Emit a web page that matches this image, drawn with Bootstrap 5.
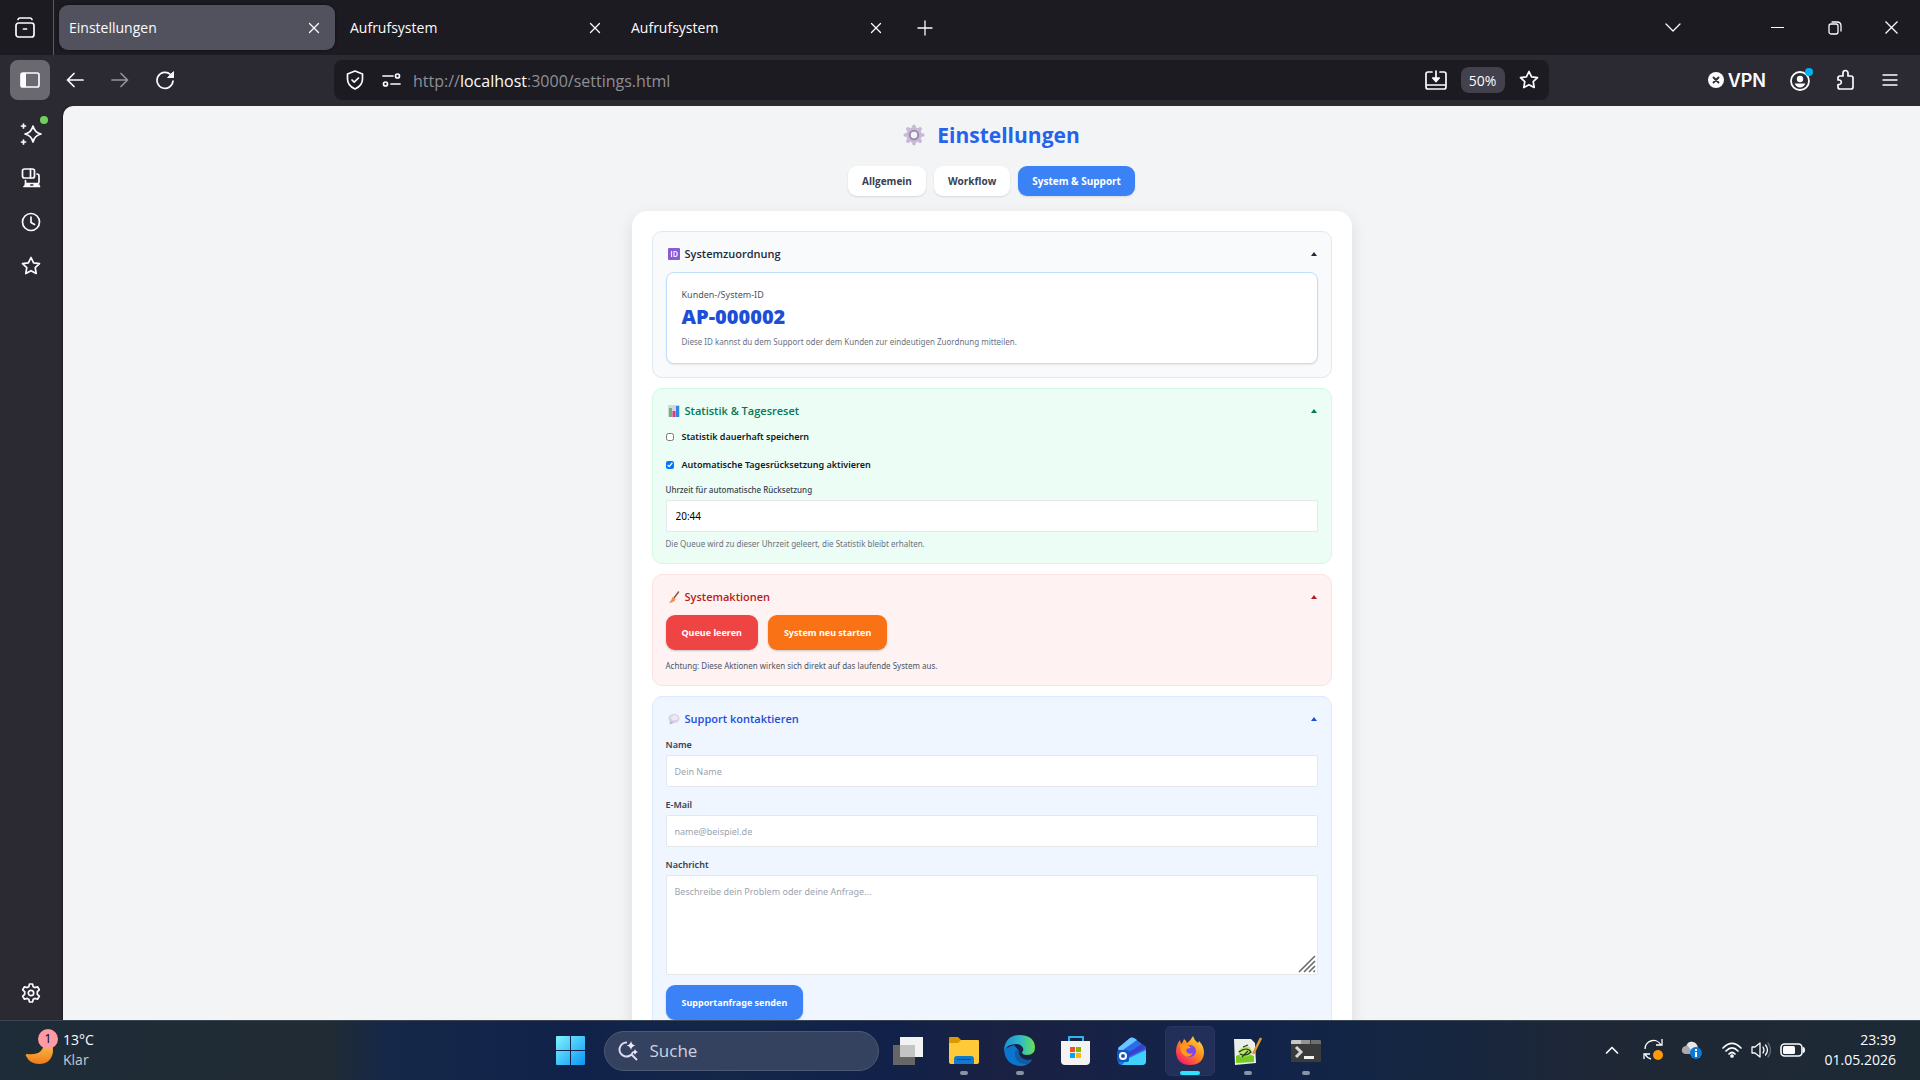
<!DOCTYPE html>
<html lang="de">
<head>
    <meta charset="UTF-8">
    <meta name="viewport" content="width=device-width, initial-scale=1">
    <title>Einstellungen</title>
    <link href="https://cdn.jsdelivr.net/npm/bootstrap@5.3.0/dist/css/bootstrap.min.css" rel="stylesheet">
    <style>
        body {
            font-family: "Open Sans", "Noto Sans", sans-serif;
            font-size: 14px;
            background-color: #2b2a33;
            color: #fbfbfe;
        }
        svg {
            display: block;
            flex-shrink: 0;
        }
        .line-icon {
            fill: none;
            stroke: currentColor;
            stroke-width: 1.7;
            stroke-linecap: round;
            stroke-linejoin: round;
        }
        .thin-icon {
            stroke-width: 1.3;
        }
        .plain-btn {
            display: flex;
            align-items: center;
            justify-content: center;
            flex-shrink: 0;
            padding: 0;
            border: 0;
            background: none;
            color: inherit;
        }

        /* Tab strip */
        .tab-strip {
            height: 55px;
            background-color: #1c1b22;
        }
        .recent-tabs {
            width: 54px;
            border-right: 1px solid #5b5b66;
            padding-right: 4px;
        }
        .tab-list {
            gap: 5px;
            margin-left: 5px;
        }
        .browser-tab {
            width: 276px;
            height: 45px;
            padding: 0 10px;
            border-radius: 9px;
        }
        .browser-tab.current {
            background-color: #52525e;
            box-shadow: 0 0 3px rgba(0, 0, 0, .6);
        }
        .tab-close {
            width: 22px;
            height: 22px;
        }
        .win-btn {
            width: 57px;
        }

        /* Toolbar */
        .tool-bar {
            height: 51px;
            padding: 5px 10px 6px;
            gap: 5px;
        }
        .tool-btn {
            width: 40px;
            height: 40px;
            border-radius: 8px;
        }
        .tool-btn.pressed {
            background-color: #6a6972;
        }
        .url-bar {
            height: 40px;
            margin: 0 154px 0 144px;
            padding: 0 6px;
            border-radius: 8px;
            background-color: #1c1b22;
        }
        .url-input {
            padding-top: 2px;
            font-size: 16px;
            color: #8f8f98;
            white-space: nowrap;
        }
        .url-input b {
            font-weight: 400;
            color: #fbfbfe;
        }
        .url-actions {
            gap: 14px;
        }
        .zoom-btn {
            width: 44px;
            height: 26px;
            border-radius: 8px;
            background-color: #42414d;
            font-size: 14px;
        }
        .vpn-btn {
            gap: 4px;
            font-family: Inter, sans-serif;
            font-size: 18px;
            font-weight: 600;
            margin-right: 9px;
        }

        /* Sidebar */
        .side-bar {
            width: 63px;
            padding-top: 8px;
            padding-bottom: 7px;
        }
        .side-btn {
            width: 62px;
            height: 40px;
        }
        .side-dot {
            top: 2px;
            right: 14px;
            width: 8px;
            height: 8px;
            background-color: #6fd35a;
        }

        /* Settings page */
        .web-page {
            min-width: 0;
            background-color: #f3f4f6;
            border-top-left-radius: 10px;
            box-shadow: 0 0 2px #000;
            color: #111827;
            font-family: "Noto Sans", "Open Sans", sans-serif;
            font-size: 9px;
            line-height: 12px;
        }
        .page-title {
            margin: 14px 0 16px;
            font-family: "Open Sans", sans-serif;
            font-size: 21px;
            line-height: 30px;
            font-weight: 700;
            color: #2563eb;
        }
        .page-tab {
            height: 30px;
            padding: 0 14px;
            border: 0;
            border-radius: 9px;
            background-color: #fff;
            box-shadow: 0 1px 2px rgba(0, 0, 0, .12);
            color: #374151;
            font-family: "Open Sans", sans-serif;
            font-size: 10px;
            font-weight: 700;
        }
        .page-tab.current {
            background-color: #3b82f6;
            color: #fff;
        }
        .settings-card {
            width: 100%;
            max-width: 720px;
            margin: 15px auto 0;
            padding: 20px;
            border-radius: 15px;
            background-color: #fff;
            box-shadow: 0 6px 16px rgba(0, 0, 0, .1);
        }
        .panel {
            margin-bottom: 10px;
            padding: 14px 13px 13px;
            border: 1px solid #e2e8f0;
            border-radius: 10px;
            background-color: #f8fafc;
        }
        .panel-green {
            background-color: #ecfdf5;
            border-color: #d1fae5;
        }
        .panel-red {
            background-color: #fef2f2;
            border-color: #fee2e2;
        }
        .panel-blue {
            background-color: #eff6ff;
            border-color: #dbeafe;
        }
        .panel-head {
            width: 100%;
            height: 16px;
            padding: 0 1px 0 2px;
            border: 0;
            background: none;
            font-family: "Open Sans", sans-serif;
            font-size: 11px;
            font-weight: 600;
            color: #1e293b;
        }
        .panel-head span {
            margin-left: 5px;
        }
        .panel-green .panel-head { color: #047857; }
        .panel-red .panel-head { color: #b91c1c; }
        .panel-blue .panel-head { color: #1d4ed8; }
        .id-box {
            margin-top: 10px;
            padding: 16px 15px;
            height: 92px;
            border: 1px solid #bfdbfe;
            border-radius: 8px;
            background-color: #fff;
            box-shadow: 0 1px 2px rgba(0, 0, 0, .08);
        }
        .id-value {
            margin: 6px 0 9px;
            font-family: "Open Sans", sans-serif;
            font-size: 20px;
            line-height: 20px;
            font-weight: 800;
            color: #1d4ed8;
        }
        .text-note {
            font-size: 8px;
            color: #6b7280;
        }
        .text-dim {
            color: #4b5563;
        }
        .check-row {
            height: 12px;
            margin-top: 12px;
            gap: 8px;
            font-weight: 600;
        }
        .check-row + .check-row {
            margin-top: 16px;
        }
        .check-row input {
            width: 8px;
            height: 8px;
            margin: 0;
        }
        .field-label {
            display: block;
            margin: 12px 0 4px;
            font-weight: 600;
            color: #374151;
        }
        .time-label {
            margin-top: 13px;
            font-size: 8px;
            font-weight: 500;
        }
        .field-box {
            display: block;
            width: 100%;
            height: 32px;
            padding: 0 8px;
            border: 1px solid #e5e7eb;
            border-radius: 2px;
            background-color: #fff;
            color: #000;
        }
        .field-box::placeholder {
            color: #9ca3af;
        }
        .time-box {
            margin-bottom: 6px;
            padding-left: 9px;
            font-size: 10px;
        }
        textarea.field-box {
            height: 100px;
            padding-top: 10px;
            resize: none;
        }
        .grip {
            right: 2px;
            bottom: 2px;
            pointer-events: none;
        }
        .action-row {
            gap: 10px;
            margin: 10px 0;
        }
        .action-btn {
            height: 35px;
            padding: 0 16px;
            border: 0;
            border-radius: 9px;
            box-shadow: 0 1px 2px rgba(0, 0, 0, .2);
            color: #fff;
            font-weight: 700;
        }
        .bg-red { background-color: #ef4444; }
        .bg-orange { background-color: #f97316; }
        .bg-blue { background-color: #3b82f6; }

        /* Taskbar */
        .task-bar {
            display: grid;
            grid-template-columns: 1fr auto 1fr;
            align-items: center;
            height: 60px;
            border-top: 1px solid #3a4650;
            background: linear-gradient(90deg, #1d2c38, #212b33 17%, #152848 20%, #11224a 30%, #142748 38%, #11214a 46%, #1a2142 52%, #11234a 65%, #142642 73%, #1f2735 84%, #1c2a34);
            line-height: 20px;
        }
        .weather {
            padding: 0 0 2px 25px;
            gap: 9px;
        }
        .weather-badge {
            top: -5px;
            left: 13px;
            width: 20px;
            height: 20px;
            background-color: #ff99a4;
            color: #000;
            font-size: 12px;
        }
        .task-center {
            padding-right: 44px;
        }
        .task-app {
            position: relative;
            width: 50px;
            height: 50px;
            border-radius: 6px;
        }
        .task-app.open::after {
            content: "";
            position: absolute;
            bottom: 1px;
            width: 8px;
            height: 4px;
            border-radius: 2px;
            background-color: #8b92a5;
        }
        .task-app.current {
            background-color: #222f58;
            border: 1px solid #2b365e;
        }
        .task-app.current::after {
            bottom: 0;
            width: 20px;
            background-color: #30e0ff;
        }
        .search-pill {
            width: 275px;
            height: 40px;
            margin: 0 4px 0 8px;
            padding: 0 13px;
            gap: 10px;
            border: 1px solid #4c5975;
            border-radius: 20px;
            background-color: #35425f;
        }
        .search-pill input {
            min-width: 0;
            border: 0;
            outline: 0;
            background: none;
            font-size: 17px;
            color: #fff;
        }
        .search-pill input::placeholder {
            color: #ced3df;
        }
        .tray {
            padding: 0 24px 2px 0;
        }
        .tray-gap {
            gap: 9px;
        }
    </style>
</head>
<body class="vh-100 d-flex flex-column overflow-hidden">

    <!-- Tabs -->
    <header class="tab-strip d-flex align-items-center flex-shrink-0">
        <button class="plain-btn recent-tabs h-100" aria-label="Letzte Tabs">
            <svg class="line-icon" width="22" height="22" viewBox="0 0 22 22"><rect x="2" y="6" width="18" height="14" rx="2.500"/><path d="M4 2.500q.5-1.500 2-1.500h10q1.500 0 2 1.500M9.500 12h3"/></svg>
        </button>
        <nav class="tab-list d-flex" aria-label="Tabs">
            <div class="browser-tab current d-flex align-items-center justify-content-between">
                <span>Einstellungen</span>
                <button class="plain-btn tab-close" aria-label="Schließen"><svg class="line-icon thin-icon" width="12" height="12" viewBox="0 0 12 12"><path d="M1.500 1.500l9 9M10.500 1.500l-9 9"/></svg></button>
            </div>
            <div class="browser-tab d-flex align-items-center justify-content-between">
                <span>Aufrufsystem</span>
                <button class="plain-btn tab-close" aria-label="Schließen"><svg class="line-icon thin-icon" width="12" height="12" viewBox="0 0 12 12"><path d="M1.500 1.500l9 9M10.500 1.500l-9 9"/></svg></button>
            </div>
            <div class="browser-tab d-flex align-items-center justify-content-between">
                <span>Aufrufsystem</span>
                <button class="plain-btn tab-close" aria-label="Schließen"><svg class="line-icon thin-icon" width="12" height="12" viewBox="0 0 12 12"><path d="M1.500 1.500l9 9M10.500 1.500l-9 9"/></svg></button>
            </div>
        </nav>
        <button class="plain-btn tool-btn ms-2" aria-label="Neuer Tab"><svg class="line-icon thin-icon" width="16" height="16" viewBox="0 0 16 16"><path d="M8 1v14M1 8h14"/></svg></button>
        <div class="d-flex align-items-center ms-auto h-100">
            <button class="plain-btn tool-btn me-5" aria-label="Alle Tabs"><svg class="line-icon thin-icon" width="18" height="12" viewBox="0 0 18 12"><path d="M2 2l7 7 7-7"/></svg></button>
            <button class="plain-btn win-btn h-100 ms-2" aria-label="Minimieren"><svg width="13" height="13" viewBox="0 0 13 13"><path fill="currentColor" d="M0 6h13v1H0z"/></svg></button>
            <button class="plain-btn win-btn h-100" aria-label="Verkleinern"><svg class="line-icon thin-icon" width="14" height="14" viewBox="0 0 14 14"><rect x="1" y="3" width="9" height="10" rx="2"/><path d="M4 1h5q4 0 4 4v5"/></svg></button>
            <button class="plain-btn win-btn h-100" aria-label="Fenster schließen"><svg width="13" height="13" viewBox="0 0 13 13"><path fill="none" stroke="currentColor" stroke-width="1.300" d="M.5.5l12 12M12.500.5l-12 12"/></svg></button>
        </div>
    </header>

    <!-- Toolbar -->
    <div class="tool-bar d-flex align-items-center flex-shrink-0">
        <button class="plain-btn tool-btn pressed" aria-label="Seitenleiste"><svg width="20" height="16" viewBox="0 0 20 16"><rect x="1" y="1" width="18" height="14" rx="2" fill="none" stroke="currentColor" stroke-width="1.700"/><path fill="currentColor" d="M1 1h5v14H1z"/></svg></button>
        <button class="plain-btn tool-btn" aria-label="Zurück"><svg class="line-icon" width="18" height="16" viewBox="0 0 18 16"><path d="M17 8H1.500M8 1.500L1.500 8 8 14.500"/></svg></button>
        <button class="plain-btn tool-btn opacity-50" aria-label="Vor"><svg class="line-icon" width="18" height="16" viewBox="0 0 18 16"><path d="M1 8h15.500M10 1.500L16.500 8 10 14.500"/></svg></button>
        <button class="plain-btn tool-btn" aria-label="Neu laden"><svg class="line-icon" width="20" height="20" viewBox="0 0 20 20"><path d="M18 11a8 8 0 1 1-2.500-6.500L18 7"/><path fill="currentColor" stroke-width="1" d="M18.500 2v5.500H13z"/></svg></button>

        <div class="url-bar d-flex align-items-center flex-grow-1">
            <button class="plain-btn me-3 ms-1" aria-label="Schutz"><svg class="line-icon" width="22" height="20" viewBox="0 0 22 20"><path d="M11 1l7.500 3v5c0 5-3 8-7.500 10C6.500 17 3.500 14 3.500 9V4zM8 10l2.200 2.200L14.500 8"/></svg></button>
            <button class="plain-btn me-2" aria-label="Berechtigungen"><svg class="line-icon" width="19" height="14" viewBox="0 0 19 14"><path d="M1 3h10M9 11h9"/><circle cx="15.500" cy="3" r="2"/><circle cx="3.500" cy="11" r="2"/></svg></button>
            <a href="#" class="url-input text-decoration-none ms-1 flex-grow-1">http://<b>localhost</b>:3000/settings.html</a>
            <div class="url-actions d-flex align-items-center me-1">
                <button class="plain-btn" aria-label="App installieren"><svg class="line-icon" width="22" height="20" viewBox="0 0 22 20"><path d="M7 2H3q-2 0-2 2v13q0 2 2 2h16q2 0 2-2V4q0-2-2-2h-4M1 15h20M11 1v9"/><path fill="currentColor" d="M7.800 8h6.400L11 11.500z"/></svg></button>
                <button class="plain-btn zoom-btn">50%</button>
                <button class="plain-btn" aria-label="Lesezeichen"><svg class="line-icon" width="20" height="20" viewBox="0 0 20 20"><path d="M10 1.500l2.600 5.300 5.900.8-4.300 4.100 1 5.800L10 14.700l-5.200 2.800 1-5.800L1.500 7.600l5.900-.8z"/></svg></button>
            </div>
        </div>

        <button class="plain-btn vpn-btn"><svg width="16" height="16" viewBox="0 0 16 16"><circle cx="8" cy="8" r="8" fill="currentColor"/><path d="M5.500 5.500l5 5M10.500 5.500l-5 5" stroke="#2b2a33" stroke-width="1.800" stroke-linecap="round"/></svg>VPN</button>
        <button class="plain-btn tool-btn" aria-label="Konto"><svg width="26" height="24" viewBox="0 0 26 24"><circle cx="13" cy="13" r="9" fill="none" stroke="currentColor" stroke-width="1.800"/><circle cx="13" cy="11" r="3.200" fill="currentColor"/><path fill="currentColor" d="M7.500 15.500h11q-2 4-5.500 4t-5.500-4z"/><circle cx="22" cy="4" r="4" fill="#00b3f4"/></svg></button>
        <button class="plain-btn tool-btn" aria-label="Erweiterungen"><svg class="line-icon" width="20" height="22" viewBox="0 0 20 22"><path d="M8 7V4a2.500 2.500 0 0 1 5 0v3h3q2 0 2 2v9q0 2-2 2H5q-2 0-2-2v-2.500h1.500a2.300 2.300 0 0 0 0-4.500H3V9q0-2 2-2z"/></svg></button>
        <button class="plain-btn tool-btn" aria-label="Menü"><svg class="line-icon thin-icon" width="16" height="14" viewBox="0 0 16 14"><path d="M1 2h14M1 7h14M1 12h14"/></svg></button>
    </div>

    <div class="d-flex flex-grow-1 overflow-hidden">
        <!-- Sidebar -->
        <aside class="side-bar d-flex flex-column flex-shrink-0 gap-1">
            <button class="plain-btn side-btn position-relative" aria-label="KI-Chatbot">
                <svg class="line-icon" width="22" height="22" viewBox="0 0 22 22"><path d="M13 3q1.500 6.500 8 8-6.500 1.500-8 8-1.500-6.500-8-8 6.500-1.500 8-8z"/><path d="M3.500 1v4M1.500 3h4M3.500 17v4M1.500 19h4"/></svg>
                <span class="side-dot position-absolute rounded-circle"></span>
            </button>
            <button class="plain-btn side-btn" aria-label="Tabs von anderen Geräten"><svg class="line-icon" width="20" height="20" viewBox="0 0 20 20"><rect x="1.500" y="1" width="12" height="9" rx="2"/><path d="M9.500 1v9M4.500 12.500v3M16 6q2 0 2 2v6q0 1.500-1.500 1.500h-12M3 18.500h15.500M4 17h4.500M13 17h5"/></svg></button>
            <button class="plain-btn side-btn" aria-label="Chronik"><svg class="line-icon" width="20" height="20" viewBox="0 0 20 20"><circle cx="10" cy="10" r="8.500"/><path d="M10 5v5.500l3.500 2"/></svg></button>
            <button class="plain-btn side-btn" aria-label="Lesezeichen"><svg class="line-icon" width="20" height="20" viewBox="0 0 20 20"><path d="M10 1.500l2.600 5.300 5.900.8-4.300 4.100 1 5.800L10 14.700l-5.200 2.800 1-5.800L1.500 7.600l5.900-.8z"/></svg></button>
            <button class="plain-btn side-btn mt-auto" aria-label="Seitenleiste anpassen"><svg class="line-icon" width="20" height="20" viewBox="0 0 20 20"><path d="M8.500 1h3l.7 2.700 1.600.9 2.700-.8 1.800 3-2 1.900v2.600l2 1.900-1.800 3-2.700-.8-1.600.9-.7 2.700h-3l-.7-2.700-1.600-.9-2.700.8-1.800-3 2-1.900V8.700l-2-1.900 1.800-3 2.700.8 1.600-.9z"/><circle cx="10" cy="10" r="2.700"/></svg></button>
        </aside>

        <!-- Settings page -->
        <main class="web-page flex-grow-1 overflow-hidden">
            <h1 class="page-title d-flex align-items-center justify-content-center">
                <svg class="me-2" width="22" height="22" viewBox="0 0 24 24"><g fill="none" stroke="#c8bad6" stroke-linecap="round"><circle cx="12" cy="12" r="6" stroke-width="5"/><path stroke-width="4" d="M12 2.500v2M12 19.500v2M2.500 12h2M19.500 12h2M5.300 5.300l1.400 1.400M17.300 17.300l1.400 1.400M5.300 18.700l1.400-1.400M17.300 6.700l1.400-1.400"/><circle cx="12" cy="12" r="4.700" stroke="#9a8bab" stroke-width="2"/></g></svg>
                <span class="ms-1">Einstellungen</span>
            </h1>
            <div class="d-flex justify-content-center gap-2">
                <button class="page-tab">Allgemein</button>
                <button class="page-tab">Workflow</button>
                <button class="page-tab current">System &amp; Support</button>
            </div>

            <div class="settings-card">
                <section class="panel">
                    <button class="panel-head d-flex align-items-center" aria-expanded="true">
                        <svg width="12" height="12" viewBox="0 0 12 12"><rect width="12" height="12" rx="1" fill="#8b5bd6"/><path d="M3.500 3v6M6 3.500h1.200q2 0 2 2.500t-2 2.500H6z" fill="none" stroke="#f0e8ff" stroke-width="1.200"/></svg>
                        <span class="me-auto">Systemzuordnung</span>
                        <svg width="6" height="5" viewBox="0 0 6 5"><path fill="currentColor" d="M3 0l3 4H0z"/></svg>
                    </button>
                    <div class="id-box">
                        <div class="text-dim">Kunden-/System-ID</div>
                        <div class="id-value">AP-000002</div>
                        <div class="text-note">Diese ID kannst du dem Support oder dem Kunden zur eindeutigen Zuordnung mitteilen.</div>
                    </div>
                </section>

                <section class="panel panel-green">
                    <button class="panel-head d-flex align-items-center" aria-expanded="true">
                        <svg width="12" height="12" viewBox="0 0 12 12"><rect width="12" height="12" rx="1" fill="#d8d3e0"/><path fill="#64b96a" d="M1 3h3v9H1z"/><path fill="#e0397d" d="M4.500 6h3v6h-3z"/><path fill="#2f86dd" d="M8 1h3v11H8z"/></svg>
                        <span class="me-auto">Statistik &amp; Tagesreset</span>
                        <svg width="6" height="5" viewBox="0 0 6 5"><path fill="currentColor" d="M3 0l3 4H0z"/></svg>
                    </button>
                    <div class="check-row d-flex align-items-center">
                        <input type="checkbox" id="saveStats">
                        <label for="saveStats">Statistik dauerhaft speichern</label>
                    </div>
                    <div class="check-row d-flex align-items-center">
                        <input type="checkbox" id="autoReset" checked>
                        <label for="autoReset">Automatische Tagesrücksetzung aktivieren</label>
                    </div>
                    <label class="field-label time-label" for="resetTime">Uhrzeit für automatische Rücksetzung</label>
                    <input class="field-box time-box" type="text" id="resetTime" value="20:44">
                    <div class="text-note">Die Queue wird zu dieser Uhrzeit geleert, die Statistik bleibt erhalten.</div>
                </section>

                <section class="panel panel-red">
                    <button class="panel-head d-flex align-items-center" aria-expanded="true">
                        <svg width="12" height="12" viewBox="0 0 12 12"><path d="M10.500 1L6 7" stroke="#8a5a4c" stroke-width="1.500" stroke-linecap="round"/><path fill="#f58f4f" d="M4.500 6L7.500 8Q6.500 12 1 11.800 3.500 10 4.500 6z"/></svg>
                        <span class="me-auto">Systemaktionen</span>
                        <svg width="6" height="5" viewBox="0 0 6 5"><path fill="currentColor" d="M3 0l3 4H0z"/></svg>
                    </button>
                    <div class="action-row d-flex">
                        <button class="action-btn bg-red">Queue leeren</button>
                        <button class="action-btn bg-orange">System neu starten</button>
                    </div>
                    <div class="text-note text-dim">Achtung: Diese Aktionen wirken sich direkt auf das laufende System aus.</div>
                </section>

                <section class="panel panel-blue">
                    <button class="panel-head d-flex align-items-center" aria-expanded="true">
                        <svg width="12" height="12" viewBox="0 0 12 12"><ellipse cx="6" cy="5.500" rx="5.500" ry="4.500" fill="#dccfe8"/><path fill="#c2b2d3" d="M2 8l-.5 3.500L6 9.800z"/><ellipse cx="6.500" cy="4.800" rx="3.500" ry="2.500" fill="#efe7f5"/></svg>
                        <span class="me-auto">Support kontaktieren</span>
                        <svg width="6" height="5" viewBox="0 0 6 5"><path fill="currentColor" d="M3 0l3 4H0z"/></svg>
                    </button>
                    <label class="field-label" for="name">Name</label>
                    <input class="field-box" type="text" id="name" placeholder="Dein Name">
                    <label class="field-label" for="email">E-Mail</label>
                    <input class="field-box" type="email" id="email" placeholder="name@beispiel.de">
                    <label class="field-label" for="message">Nachricht</label>
                    <div class="position-relative">
                        <textarea class="field-box" id="message" placeholder="Beschreibe dein Problem oder deine Anfrage..."></textarea>
                        <svg class="grip position-absolute" width="18" height="18" viewBox="0 0 18 18"><path d="M1 17L17 1M6 17L17 6M11 17l6-6M15.500 17l1.500-1.500" stroke="#6b6b6b" stroke-width="1.600"/></svg>
                    </div>
                    <div class="action-row d-flex">
                        <button class="action-btn bg-blue">Supportanfrage senden</button>
                    </div>
                </section>
            </div>
        </main>
    </div>

    <!-- Taskbar -->
    <footer class="task-bar flex-shrink-0">
        <div class="weather d-flex align-items-center">
            <div class="position-relative">
                <svg width="29" height="32" viewBox="0 0 29 32"><defs><linearGradient id="moon" x2="0" y2="1"><stop offset="0" stop-color="#f9d64a"/><stop offset="1" stop-color="#f07a1c"/></linearGradient></defs><path fill="url(#moon)" d="M21 4q8 6 7 14-2 12-14 12Q5 30 1 22q-1-2 1-2 16 2 17-11z"/></svg>
                <span class="weather-badge position-absolute rounded-circle d-flex align-items-center justify-content-center">1</span>
            </div>
            <div>
                <div>13°C</div>
                <div class="opacity-75">Klar</div>
            </div>
        </div>

        <div class="task-center d-flex align-items-center">
            <button class="plain-btn task-app" aria-label="Start"><svg width="30" height="30" viewBox="0 0 30 30"><defs><linearGradient id="win" x2="1" y2="1"><stop offset="0" stop-color="#7df5ff"/><stop offset="1" stop-color="#0a95f5"/></linearGradient></defs><path fill="url(#win)" d="M1 0h13v14H0V1q0-1 1-1zM15 0h13q1 0 1 1v13H15zM0 15h14v14H1q-1 0-1-1zM15 15h14v13q0 1-1 1H15z"/></svg></button>
            <div class="search-pill d-flex align-items-center">
                <svg width="20" height="20" viewBox="0 0 20 20"><path d="M9 1.500a7 7 0 1 0 6 9.500M13.500 13.500L19 19" fill="none" stroke="#d9ddf5" stroke-width="2"/><path fill="#f4e6ff" d="M13 0q.8 4 4.500 4.500Q13.800 5.200 13 9 12.200 5.200 8.500 4.500 12.200 4 13 0zM17 8q.4 2.500 3 3-2.600.4-3 3-.4-2.600-3-3 2.600-.5 3-3z"/></svg>
                <input type="text" placeholder="Suche" aria-label="Suche">
            </div>
            <div class="d-flex" style="gap: 6px">
                <button class="plain-btn task-app" aria-label="Aktive Anwendungen"><svg width="30" height="28" viewBox="0 0 30 28"><path fill="#666" d="M0 8h22v20H0z"/><path fill="#f2f2f2" d="M7 0h23v20H7z"/><path fill="#c4c4c4" d="M7 8h15v12H7z"/></svg></button>
                <button class="plain-btn task-app open" aria-label="Explorer"><svg width="30" height="27" viewBox="0 0 30 27"><path fill="#dd9a00" d="M0 1q0-1 1-1h8l3 3h5v4H0z"/><path fill="#ffc937" d="M0 6h9l3-3h17q1 0 1 1v21q0 2-2 2H2q-2 0-2-2z"/><path fill="#0f78cf" d="M5 27v-5q0-3 3-3h14q3 0 3 3v5z"/><path fill="#0a4f95" d="M8 22h14v1H8z"/></svg></button>
                <button class="plain-btn task-app open" aria-label="Edge"><svg width="31" height="31" viewBox="0 0 31 31"><defs><linearGradient id="edge" x2="1"><stop offset="0" stop-color="#1b8fd6"/><stop offset=".55" stop-color="#2fbbc5"/><stop offset="1" stop-color="#6be34f"/></linearGradient></defs><path fill="#0b74cf" d="M0 14q1 16 16 17 8 0 12-6-5 2-9 0-5-3-4-9l-5-6z"/><path fill="#135a9e" d="M11 16q-1 13 12 13 4-2 5-5-4 2-8 0-6-3-5-9z"/><path fill="url(#edge)" d="M0 15Q1 1 15 0q15 0 16 12 0 8-8 8-5 0-5-3 2-1 1-4-2-4-7-4Q4 9 0 15z"/></svg></button>
                <button class="plain-btn task-app" aria-label="Microsoft Store"><svg width="30" height="30" viewBox="0 0 30 30"><path d="M8 7V1h14v6" fill="none" stroke="#2bb5f0" stroke-width="2"/><path fill="#f3f3f3" d="M0 5h29v20q0 4-4 4H4q-4 0-4-4z"/><path fill="#f25022" d="M9 11h5v5H9z"/><path fill="#7fba00" d="M15 11h5v5h-5z"/><path fill="#00a4ef" d="M9 17h5v5H9z"/><path fill="#ffb900" d="M15 17h5v5h-5z"/></svg></button>
                <button class="plain-btn task-app" aria-label="Outlook"><svg width="30" height="28" viewBox="0 0 30 28"><path fill="#2a6de8" d="M1 11L13 1q2-1 4 0l12 9v14q0 4-4 4H5q-4 0-4-4z"/><path fill="#6bc3ff" d="M1 11L13 1q2-1 4 0l3 2L3 15z"/><path fill="#3c3fc7" d="M25 7l4 4L9 21l-3-2z"/><path fill="#3fd0fb" d="M29 13v11q0 4-4 4H5l5-6z"/><rect y="13" width="12" height="12" rx="2" fill="#1157c2"/><circle cx="6" cy="19" r="3" fill="none" stroke="#fff" stroke-width="2"/></svg></button>
            </div>
            <div class="d-flex ms-2" style="gap: 8px">
                <button class="plain-btn task-app open current" aria-label="Firefox"><svg width="30" height="30" viewBox="0 0 30 30"><defs><linearGradient id="fox" x1="1" x2=".2" y2="1"><stop offset="0" stop-color="#fff04a"/><stop offset=".5" stop-color="#ff8a1e"/><stop offset="1" stop-color="#f5156c"/></linearGradient></defs><path fill="url(#fox)" d="M18 0q1 4 5 7l1-2q5 5 5 12-1 12-14 12T1 16Q1 9 5 4l1 4q2-2 3-5 2 1 3 4 4-3 6-7z"/><circle cx="15" cy="15" r="6" fill="#8048e8"/><path fill="#ff9a1c" d="M5 9q5-2 9 1l2 2q-5 0-5 3 2 4 7 2-3 5-8 3-5-3-5-11z"/></svg></button>
                <button class="plain-btn task-app open" aria-label="Notepad++"><svg width="30" height="28" viewBox="0 0 30 28"><path fill="#eceeea" d="M1 2h17l4 4 1 20-21 2z"/><path fill="#74cc1e" d="M3 19q8-5 18 0v6L3 26z"/><path fill="#b9e36a" d="M5 14q5-6 12-4l2 5-3 4-9 1z"/><path d="M6 15q8-6 12 0-5 5-11 2M10 10l5-2M9 20l6-6" fill="none" stroke="#1d3a12" stroke-width="1.200"/><path d="M28 1L20 17" stroke="#d99a2b" stroke-width="2.500"/></svg></button>
                <button class="plain-btn task-app open" aria-label="Terminal"><svg width="30" height="24" viewBox="0 0 30 24"><rect width="30" height="22" y="1" rx="1" fill="#3b3b3b"/><path fill="#c6c6c6" d="M1 1h9v4H0V2z"/><path fill="#949494" d="M10 1h9v4h-9z"/><path fill="#6f6f6f" d="M20 1h9l1 1v3H20z"/><path d="M5 8l5 5-5 5" fill="none" stroke="#d6d6d6" stroke-width="3"/><path fill="#f2f2f2" d="M13 17h10v3H13z"/></svg></button>
            </div>
        </div>

        <div class="tray d-flex align-items-center justify-content-end">
            <button class="plain-btn me-4" aria-label="Ausgeblendete Symbole"><svg class="line-icon" width="14" height="10" viewBox="0 0 14 10"><path d="M1.500 8L7 2.500 12.500 8"/></svg></button>
            <button class="plain-btn me-3" aria-label="Update"><svg width="22" height="22" viewBox="0 0 22 22"><path d="M2 10a8.500 8.500 0 0 1 16-4M13 6h6V0M8 20q-4-1-6-5M1 20v-5h6" fill="none" stroke="#fff" stroke-width="1.300"/><circle cx="15" cy="16" r="5" fill="#ff9a0a"/></svg></button>
            <button class="plain-btn me-3" aria-label="OneDrive"><svg width="21" height="20" viewBox="0 0 21 20"><path fill="#a9a9ae" d="M4 14q-4-1-3-5 1-3 4-3 2-5 7-4 4 1 5 5l2 5-7 2z"/><path fill="#e8e8ec" d="M6 5q2-4 6-3 4 1 4 5-4 0-6 3z"/><circle cx="15" cy="13" r="6" fill="#0a78d6"/><path fill="#fff" d="M14 9h2v2h-2zM14 12h2v5h-2z"/></svg></button>
            <button class="plain-btn tray-gap me-3 ms-1" aria-label="Netzwerk, Lautstärke, Akku">
                <svg class="line-icon" width="20" height="16" viewBox="0 0 20 16"><path d="M1 6q9-9 18 0M4 9q6-6 12 0M7 12q3-3 6 0"/><circle cx="10" cy="14" r="1" fill="currentColor"/></svg>
                <svg class="line-icon thin-icon" width="20" height="18" viewBox="0 0 20 18"><path d="M1 6v6h3l5 4V2L4 6zM12 6q2 3 0 6M14.500 4q4 5 0 10"/><path opacity=".3" d="M17 2q5 7 0 14"/></svg>
                <svg width="25" height="14" viewBox="0 0 25 14"><rect x="1" y="1" width="21" height="12" rx="3.500" fill="none" stroke="currentColor" stroke-width="1.600"/><rect x="3" y="3" width="12" height="8" rx="1.500" fill="currentColor"/><path fill="currentColor" d="M23 4q2 0 2 3t-2 3z"/></svg>
            </button>
            <div class="text-end ms-1">
                <div>23:39</div>
                <div>01.05.2026</div>
            </div>
        </div>
    </footer>

    <script src="https://cdn.jsdelivr.net/npm/bootstrap@5.3.0/dist/js/bootstrap.bundle.min.js"></script>
</body>
</html>
